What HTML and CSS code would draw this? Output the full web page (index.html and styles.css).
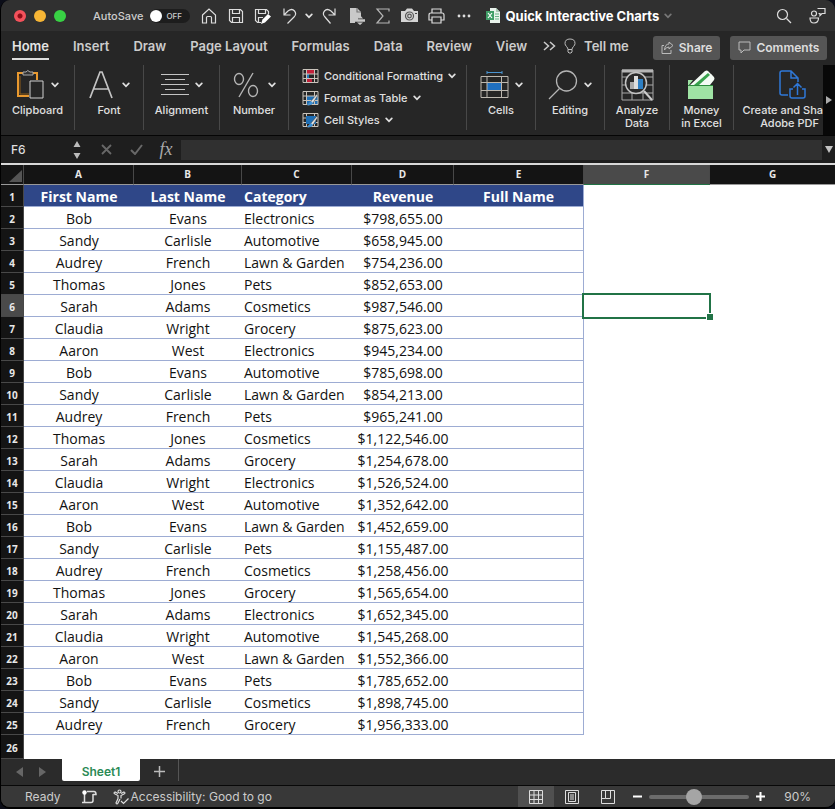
FILE: index.html
```
<!DOCTYPE html>
<html lang="en">
<head>
    <meta charset="utf-8">
    <title>Quick Interactive Charts</title>
    <link rel="stylesheet" href="styles.css">
</head>
<body>
<svg class="defs" aria-hidden="true">
    <symbol id="chev" viewBox="0 0 8 6"><path d="M1.200 1.400 4 4.300 6.800 1.400" fill="none" stroke="currentColor" stroke-width="1.700" stroke-linecap="round"/></symbol>
    <symbol id="grid" viewBox="0 0 17 16"><path d="M1 1.500h15v13H1zM1 6h15M1 10.500h15M4.500 1.500v13M12.500 1.500v13" fill="none" stroke="#c9c3bb"/></symbol>
</svg>
<div class="window">
    <header class="titlebar">
        <div class="lights">
            <button class="light red" aria-label="Close"></button>
            <button class="light yellow" aria-label="Minimize"></button>
            <button class="light green" aria-label="Zoom"></button>
        </div>
        <label class="autosave">AutoSave
            <span class="switch"><input type="checkbox" role="switch"><span class="off">OFF</span></span>
        </label>
        <div class="quick">
            <button aria-label="Home"><svg width="16" height="16" viewBox="0 0 16 16"><path d="M1.500 7 8 1l6.500 6v8h-4V9.500q0-1-1-1h-3q-1 0-1 1V15h-4z"/></svg></button>
            <button aria-label="Save"><svg width="16" height="16" viewBox="0 0 16 16"><path d="M1.500 1.500h11l2 2v11h-11l-2-2zM4.500 1.500v4h7v-4M4.500 14.500v-5h7v5"/></svg></button>
            <button aria-label="Save as"><svg width="17" height="16" viewBox="0 0 17 16"><path d="M7 14.500H3.500l-2-2v-11h11l2 2V6M4.500 1.500v4h7v-4M4.500 14.500v-5H9"/><path d="m7 16 1.500-4.500L14 6l3 2.500-6 6z" fill="#fff" stroke="none"/></svg></button>
            <button aria-label="Undo"><svg width="16" height="18" viewBox="0 0 16 18"><path d="M2 1.500V8h6.500M2.500 7.500 6 4q4-3 6.500 0 2.500 3-.5 6l-6.500 6.500"/></svg></button>
            <button class="narrow" aria-label="Undo list"><svg width="8" height="6"><use href="#chev"/></svg></button>
            <button aria-label="Redo"><svg width="16" height="18" viewBox="0 0 16 18"><path d="M14 1.500V8H7.500M13.500 7.500 10 4Q6 1 3.500 4 1 7 4 10l5.500 6.500"/></svg></button>
            <button class="page" aria-label="New sheet"><svg width="17" height="18" viewBox="0 0 17 18"><path d="M1 1h7l4 4v5H9v3H6v3H1z" fill="#c9c9c9" stroke="none"/><path d="M8 1v4h4" stroke="#777"/><path d="M6 13.500h10" stroke="#c9c9c9" stroke-width="2.500"/><path d="m11 8 3 3.500H8zM8 15.500h6l-3 2.500z" fill="#c9c9c9" stroke="none"/></svg></button>
            <button aria-label="AutoSum"><svg width="16" height="16" viewBox="0 0 16 16"><path d="M14 3.500V1H2l6 7-6 7h12v-2.500" stroke="#b5b5b5"/></svg></button>
            <button aria-label="Camera"><svg width="19" height="15" viewBox="0 0 19 15"><path d="M1 3h4l2-2.500h5L14 3h4v11H1z" fill="#d4d4d4" stroke="none"/><circle cx="9.500" cy="8" r="4" stroke="#555"/><circle cx="9.500" cy="8" r="1.800" stroke="#555"/><path d="M15 5.500h2" stroke="#444"/></svg></button>
            <button aria-label="Print"><svg width="17" height="16" viewBox="0 0 17 16"><path d="M4 4.500V1h9v3.500M4 12H1V7q0-2 2-2h11q2 0 2 2v5h-3M4 9h9v6H4z"/></svg></button>
            <button aria-label="More"><svg width="14" height="4" viewBox="0 0 14 4"><g fill="#ddd" stroke="none"><circle cx="2" cy="2" r="1.400"/><circle cx="7" cy="2" r="1.400"/><circle cx="12" cy="2" r="1.400"/></g></svg></button>
        </div>
        <h1 class="doc">
            <svg width="14" height="15" viewBox="0 0 14 15"><path d="M4 0h6l4 4v11H4z" fill="#e9f3ec"/><path d="M10 0v4h4z" fill="#a9c9b4"/><path d="M9 6h4M9 8.500h4M9 11h4" stroke="#6bb487"/><path d="M0 3h8v9H0z" fill="#3f9d66"/><path d="m2 5 4 5M6 5l-4 5" stroke="#fff" stroke-width="1.200"/></svg>
            Quick Interactive Charts
            <svg class="dim" width="8" height="6"><use href="#chev"/></svg>
        </h1>
        <div class="right">
            <button aria-label="Search"><svg width="16" height="16" viewBox="0 0 16 16"><circle cx="6.500" cy="6.500" r="5"/><path d="m10.500 10.500 4.500 4.500"/></svg></button>
            <button aria-label="Collaborate"><svg width="17" height="17" viewBox="0 0 17 17"><circle cx="5" cy="6.500" r="2.500"/><path d="M1 11h8.500q0 5-4.500 5-4 0-4-5zM8.500 1.500H16v5h-3l-2 2v-2h-1.500"/></svg></button>
        </div>
    </header>

    <nav class="tabs">
        <a class="active" href="#">Home</a>
        <a href="#">Insert</a>
        <a href="#">Draw</a>
        <a href="#">Page Layout</a>
        <a href="#">Formulas</a>
        <a href="#">Data</a>
        <a href="#">Review</a>
        <a href="#">View</a>
        <button class="tell" aria-label="More tabs"><svg width="13" height="10" viewBox="0 0 13 10"><path d="m1 1 4.500 4L1 9M7 1l4.500 4L7 9" fill="none" stroke="#ccc" stroke-width="1.500"/></svg></button>
        <button class="tell"><svg width="12" height="16" viewBox="0 0 12 16"><path d="M4 11.500Q4 10 2.500 8.500 1 7 1 5.500 1 1 6 1t5 4.500Q11 7 9.500 8.500 8 10 8 11.500zM4 11.500V14l1 1h2l1-1v-2.500" fill="none" stroke="#bbb"/></svg>Tell me</button>
        <div class="actions">
            <button class="action"><svg width="13" height="13" viewBox="0 0 13 13"><path d="M3 4.500H1v8h9V9M8 1l4 3.500L8 8V6Q5 6 3.500 9 4 3 8 3z"/></svg>Share</button>
            <button class="action"><svg width="13" height="13" viewBox="0 0 13 13"><path d="M1 1h11v8H6l-3 3V9H1z"/></svg>Comments</button>
        </div>
    </nav>

    <section class="ribbon">
        <button class="group g-clip">
            <span class="pic">
                <svg width="29" height="31" viewBox="0 0 29 31"><path d="M7 4H2v23h11M17 4h4v7" fill="none" stroke="#e9992f" stroke-width="2"/><path d="M4 7v18h9" fill="none" stroke="#8b5a18"/><path d="M7 6V3h3q1.500-3 4 0h3v3z" fill="#333" stroke="#aaa"/><path d="M14 12h13v17H14z" fill="#262626" stroke="#d0d0d0"/></svg>
                <svg width="8" height="6"><use href="#chev"/></svg>
            </span>Clipboard</button>
        <button class="group g-font">
            <span class="pic wide">
                <svg width="24" height="30" viewBox="0 0 24 30"><path d="M1 28 11 2h2l10 26M5 19h14" fill="none" stroke="#c4c4c4" stroke-width="1.700"/></svg>
                <svg width="8" height="6"><use href="#chev"/></svg>
            </span>Font</button>
        <button class="group g-align">
            <span class="pic">
                <svg width="28" height="24" viewBox="0 0 28 24"><path d="M0 1.500h28M4 6.500h20M0 11.500h28M4 16.500h20M0 21.500h28" stroke="#c4c4c4"/></svg>
                <svg width="8" height="6"><use href="#chev"/></svg>
            </span>Alignment</button>
        <button class="group g-num">
            <span class="pic wide">
                <svg width="26" height="26" viewBox="0 0 26 26"><g fill="none" stroke="#b5b5b5" stroke-width="1.400"><ellipse cx="6" cy="7" rx="4.500" ry="5.500"/><ellipse cx="20" cy="19" rx="4.500" ry="5.500"/><path d="M20 1 6 25"/></g></svg>
                <svg width="8" height="6"><use href="#chev"/></svg>
            </span>Number</button>
        <div class="group g-styles">
            <button><svg width="17" height="16"><path d="M4 1h8v5H4zM4 11h6v4H4z" fill="#c2213b"/><path d="M4 6h3v4H4z" fill="#2777b8"/><use href="#grid"/></svg>Conditional Formatting<svg width="8" height="6"><use href="#chev"/></svg></button>
            <button><svg width="17" height="16"><path d="M5 6h11v9H5z" fill="#1f6fb5"/><use href="#grid"/><path d="m15 4-6 7-4 4q4 1 6-2l5-8z" fill="#ddd" stroke="#333" stroke-width=".5"/><path d="m9 11-4 4q4 1 6-2z" fill="#3d92d8"/></svg>Format as Table<svg width="8" height="6"><use href="#chev"/></svg></button>
            <button><svg width="17" height="16"><use href="#grid"/><path d="M4 4h10v8H4z" fill="#1f6fb5"/><path d="m15 4-6 7-4 4q4 1 6-2l5-8z" fill="#ddd" stroke="#333" stroke-width=".5"/><path d="m9 11-4 4q4 1 6-2z" fill="#3d92d8"/></svg>Cell Styles<svg width="8" height="6"><use href="#chev"/></svg></button>
        </div>
        <button class="group g-cells">
            <span class="pic">
                <svg width="29" height="29" viewBox="0 0 29 29"><path d="M7 2.500h15M7 1v3M22 1v3" fill="none" stroke="#4a94d0"/><path d="M7 13h14v7H7z" fill="#1f6fc0"/><path d="M1 6.500h27v21H1zM1 12.500h27M1 20.500h27M7 6.500v21M21.500 6.500v21" fill="none" stroke="#bdb8b0"/></svg>
                <svg width="8" height="6"><use href="#chev"/></svg>
            </span>Cells</button>
        <button class="group g-edit">
            <span class="pic">
                <svg width="30" height="30" viewBox="0 0 30 30"><circle cx="18.500" cy="11" r="10" fill="none" stroke="#b5b5b5" stroke-width="1.300"/><path d="M11.500 18.500 1 29" stroke="#b5b5b5" stroke-width="1.300"/></svg>
                <svg width="8" height="6"><use href="#chev"/></svg>
            </span>Editing</button>
        <button class="group g-an">
            <span class="pic"><svg width="33" height="32" viewBox="0 0 33 32"><path d="M1 1h31v30H1zM1 8h31M1 16h31M1 24h31M11 20v11M22 22v9" fill="none" stroke="#a8a8a8"/><path d="M1 2h31" stroke="#b5b5b5" stroke-width="3"/><circle cx="15" cy="14" r="10.500" fill="#2a2a2a" stroke="#c4c4c4" stroke-width="1.500"/><path d="M9 13h4v7H9z" fill="#aaa"/><path d="M13 7h4v13h-4z" fill="#ddd"/><path d="M17 10h5v10h-5z" fill="#2d7fc4"/><path d="m23 22 8 9" stroke="#ccc" stroke-width="2"/></svg></span>Analyze<br>Data</button>
        <button class="group g-money">
            <span class="pic"><svg width="29" height="30" viewBox="0 0 29 30"><path d="M3 15 18 1q2-1 3 0l6 6q1 2 0 3l-4 5z" fill="#f4fbf5"/><path d="m7 15 14-12 4 4-9 8z" fill="#38a24d"/><path d="m12 15 12-11 3 4-7 7z" fill="#f4fbf5"/><path d="M1 10h5l-4 5h24v14H1z" fill="#9fe3a4"/><path d="M1 15.500h25" stroke="#2b8a3c"/></svg></span>Money<br>in Excel</button>
        <button class="group g-pdf">
            <span class="pic"><svg width="27" height="30" viewBox="0 0 27 30"><path d="M9 25H3q-2 0-2-2V3q0-2 2-2h9l7 7v4M12 1v7h7M14 19h-3v7q0 2 2 2h11q2 0 2-2v-7h-3M18.500 25V14M14.500 17.500l4-4 4 4" fill="none" stroke="#2f78d8" stroke-width="1.500"/></svg></span><span>Create and Sha</span><span class="second">Adobe PDF</span></button>
        <button class="more" aria-label="Scroll ribbon"><svg width="6" height="8" viewBox="0 0 6 8"><path d="M0 0v8l6-4z" fill="#aaa"/></svg></button>
    </section>

    <section class="formula">
        <input class="name" aria-label="Name box" value="F6">
        <span class="step"><svg width="8" height="20" viewBox="0 0 8 20"><path d="M4 1 7.500 7h-7zM.5 13h7L4 19z" fill="#bbb"/></svg></span>
        <button aria-label="Cancel"><svg width="11" height="11" viewBox="0 0 11 11"><path d="m1 1 9 9M10 1l-9 9" stroke="#686868" stroke-width="1.800"/></svg></button>
        <button aria-label="Enter"><svg width="13" height="11" viewBox="0 0 13 11"><path d="m1 6 4 4 7-9" fill="none" stroke="#686868" stroke-width="2"/></svg></button>
        <button class="fx" aria-label="Insert function">fx</button>
        <input class="entry" aria-label="Formula bar">
        <button class="expand" aria-label="Expand"><svg width="8" height="7" viewBox="0 0 8 7"><path d="M0 0h8L4 7z" fill="#c4c4c4"/></svg></button>
    </section>

    <main class="sheet">
        <table>
            <colgroup><col class="c-num"><col class="c-a"><col class="c-b"><col class="c-c"><col class="c-d"><col class="c-e"><col class="c-f"><col></colgroup>
            <thead>
                <tr><th class="corner"><svg width="13" height="12" viewBox="0 0 13 12"><path d="M13 0v12H0z" fill="#555"/></svg></th><th>A</th><th>B</th><th>C</th><th>D</th><th>E</th><th class="sel">F</th><th>G</th></tr>
            </thead>
            <tbody>
                <tr class="head"><th>1</th><td>First Name</td><td>Last Name</td><td>Category</td><td>Revenue</td><td>Full Name</td><td></td><td></td></tr>
                <tr><th>2</th><td>Bob</td><td>Evans</td><td>Electronics</td><td>$798,655.00</td><td></td><td></td><td></td></tr>
                <tr><th>3</th><td>Sandy</td><td>Carlisle</td><td>Automotive</td><td>$658,945.00</td><td></td><td></td><td></td></tr>
                <tr><th>4</th><td>Audrey</td><td>French</td><td>Lawn &amp; Garden</td><td>$754,236.00</td><td></td><td></td><td></td></tr>
                <tr><th>5</th><td>Thomas</td><td>Jones</td><td>Pets</td><td>$852,653.00</td><td></td><td></td><td></td></tr>
                <tr><th class="sel">6</th><td>Sarah</td><td>Adams</td><td>Cosmetics</td><td>$987,546.00</td><td></td><td class="cursor"></td><td></td></tr>
                <tr><th>7</th><td>Claudia</td><td>Wright</td><td>Grocery</td><td>$875,623.00</td><td></td><td></td><td></td></tr>
                <tr><th>8</th><td>Aaron</td><td>West</td><td>Electronics</td><td>$945,234.00</td><td></td><td></td><td></td></tr>
                <tr><th>9</th><td>Bob</td><td>Evans</td><td>Automotive</td><td>$785,698.00</td><td></td><td></td><td></td></tr>
                <tr><th>10</th><td>Sandy</td><td>Carlisle</td><td>Lawn &amp; Garden</td><td>$854,213.00</td><td></td><td></td><td></td></tr>
                <tr><th>11</th><td>Audrey</td><td>French</td><td>Pets</td><td>$965,241.00</td><td></td><td></td><td></td></tr>
                <tr><th>12</th><td>Thomas</td><td>Jones</td><td>Cosmetics</td><td>$1,122,546.00</td><td></td><td></td><td></td></tr>
                <tr><th>13</th><td>Sarah</td><td>Adams</td><td>Grocery</td><td>$1,254,678.00</td><td></td><td></td><td></td></tr>
                <tr><th>14</th><td>Claudia</td><td>Wright</td><td>Electronics</td><td>$1,526,524.00</td><td></td><td></td><td></td></tr>
                <tr><th>15</th><td>Aaron</td><td>West</td><td>Automotive</td><td>$1,352,642.00</td><td></td><td></td><td></td></tr>
                <tr><th>16</th><td>Bob</td><td>Evans</td><td>Lawn &amp; Garden</td><td>$1,452,659.00</td><td></td><td></td><td></td></tr>
                <tr><th>17</th><td>Sandy</td><td>Carlisle</td><td>Pets</td><td>$1,155,487.00</td><td></td><td></td><td></td></tr>
                <tr><th>18</th><td>Audrey</td><td>French</td><td>Cosmetics</td><td>$1,258,456.00</td><td></td><td></td><td></td></tr>
                <tr><th>19</th><td>Thomas</td><td>Jones</td><td>Grocery</td><td>$1,565,654.00</td><td></td><td></td><td></td></tr>
                <tr><th>20</th><td>Sarah</td><td>Adams</td><td>Electronics</td><td>$1,652,345.00</td><td></td><td></td><td></td></tr>
                <tr><th>21</th><td>Claudia</td><td>Wright</td><td>Automotive</td><td>$1,545,268.00</td><td></td><td></td><td></td></tr>
                <tr><th>22</th><td>Aaron</td><td>West</td><td>Lawn &amp; Garden</td><td>$1,552,366.00</td><td></td><td></td><td></td></tr>
                <tr><th>23</th><td>Bob</td><td>Evans</td><td>Pets</td><td>$1,785,652.00</td><td></td><td></td><td></td></tr>
                <tr><th>24</th><td>Sandy</td><td>Carlisle</td><td>Cosmetics</td><td>$1,898,745.00</td><td></td><td></td><td></td></tr>
                <tr><th>25</th><td>Audrey</td><td>French</td><td>Grocery</td><td>$1,956,333.00</td><td></td><td></td><td></td></tr>
                <tr class="blank"><th>26</th><td></td><td></td><td></td><td></td><td></td><td></td><td></td></tr>
            </tbody>
        </table>
    </main>

    <nav class="sheets">
        <button aria-label="Previous sheet"><svg width="7" height="10" viewBox="0 0 7 10"><path d="M7 0v10L0 5z" fill="#666"/></svg></button>
        <button aria-label="Next sheet"><svg width="7" height="10" viewBox="0 0 7 10"><path d="M0 0v10l7-5z" fill="#666"/></svg></button>
        <a class="current" href="#">Sheet1</a>
        <button class="add" aria-label="Add sheet"><svg width="11" height="11" viewBox="0 0 11 11"><path d="M5.500 0v11M0 5.500h11" stroke="#bbb" stroke-width="1.500"/></svg></button>
    </nav>

    <footer class="status">
        <span class="ready">Ready</span>
        <svg class="macro" width="16" height="14" viewBox="0 0 16 14"><path d="M3.500 3v9M1 12.500h9q2 0 2-2V4M6 1.500h7q2 0 2 3h-3" fill="none" stroke="#ddd" stroke-width="1.500"/><circle cx="3.500" cy="2.500" r="2.200" fill="#fff"/></svg>
        <button class="access"><svg width="16" height="16" viewBox="0 0 16 16"><g fill="none" stroke="#ddd" stroke-width="1.200"><circle cx="6.500" cy="2.500" r="1.500"/><path d="M5 4.500 2 3Q0 4 2 5l3 1.500v3L3 14q1 2 2 0l2-4M8 4.500 11 3q2 1 0 2L8 6.500v3M8 12l2.500 2.500 5-5"/></g></svg>Accessibility: Good to go</button>
        <div class="views">
            <button class="on" aria-label="Normal"><svg width="14" height="14" viewBox="0 0 14 14"><path d="M.5.5h13v13H.5zM.5 5h13M.5 9.500h13M5 .5v13M9.500.5v13"/></svg></button>
            <button aria-label="Page layout"><svg width="14" height="14" viewBox="0 0 14 14"><path d="M.5.5h13v13H.5zM3.500 2.500h7v9h-7zM5 5h4M5 7h4M5 9h4"/></svg></button>
            <button aria-label="Page break"><svg width="14" height="14" viewBox="0 0 14 14"><path d="M.5.5h13v13H.5zM4.500.5v8h5v-8M.5 8.500h4"/></svg></button>
        </div>
        <div class="zoom">
            <button aria-label="Zoom out"><svg width="9" height="9" viewBox="0 0 9 9"><path d="M0 4.500h9" stroke="#fff" stroke-width="2"/></svg></button>
            <input type="range" aria-label="Zoom" min="0" max="100" value="44">
            <button aria-label="Zoom in"><svg width="9" height="9" viewBox="0 0 9 9"><path d="M0 4.500h9M4.500 0v9" stroke="#fff" stroke-width="2"/></svg></button>
            <span class="pct">90%</span>
        </div>
    </footer>
</div>
</body>
</html>
```
FILE: styles.css
```
* {
    box-sizing: border-box;
}
body {
    margin: 0;
    background: #0b0d18;
    font-family: Inter, "Liberation Sans", sans-serif;
    color: #e0e0e0;
}
button {
    display: flex;
    align-items: center;
    justify-content: center;
    padding: 0;
    border: 0;
    background: none;
    color: inherit;
    font: inherit;
}
a {
    color: inherit;
    text-decoration: none;
}
svg {
    display: block;
    flex: none;
}
.defs {
    position: absolute;
    width: 0;
    height: 0;
}
.window {
    display: flex;
    flex-direction: column;
    height: 100vh;
    border-left: 1px solid #000;
    border-bottom: 2px solid #000;
    border-radius: 10px;
    overflow: hidden;
    background: #262626;
}

/* title bar */
.titlebar {
    display: flex;
    align-items: center;
    height: 31px;
    padding: 0 9px 0 13px;
    background: #303030;
}
.lights {
    display: flex;
    gap: 8px;
}
.light {
    width: 12px;
    height: 12px;
    border-radius: 50%;
}
.red {
    background: radial-gradient(circle, #8c0d16 2px, #f4515b 3px);
}
.yellow {
    background: #f6b535;
}
.green {
    background: #38d144;
}
.autosave {
    display: flex;
    align-items: center;
    gap: 7px;
    margin: 0 5px 0 27px;
    font-size: 11px;
    font-weight: 500;
    color: #ccc;
}
.switch {
    display: flex;
    align-items: center;
    width: 40px;
    height: 14px;
    border-radius: 7px;
    background: #1d1d1d;
    font-size: 8px;
    gap: 4px;
}
.switch input {
    appearance: none;
    width: 12px;
    height: 12px;
    margin: 0;
    border-radius: 50%;
    background: #fff;
}
.quick {
    display: flex;
}
.quick button {
    width: 27px;
    height: 24px;
}
.quick .narrow {
    width: 12px;
}
.quick .page {
    padding-left: 4px;
}
.quick svg,
.right svg {
    fill: none;
    stroke: #ddd;
    stroke-width: 1.2;
}
.doc {
    display: flex;
    align-items: center;
    gap: 5px;
    margin: 0 0 0 9px;
    font-size: 13px;
    font-weight: 700;
    color: #fff;
    white-space: nowrap;
}
.dim {
    color: #777;
}
.right {
    display: flex;
    gap: 17px;
    margin-left: auto;
}

/* ribbon tabs */
.tabs {
    display: flex;
    align-items: center;
    gap: 24px;
    height: 31px;
    padding: 0 8px 0 11px;
    font-size: 13px;
    font-weight: 600;
    color: #ccc;
    white-space: nowrap;
}
.tabs a {
    height: 27px;
    line-height: 26px;
    border-bottom: 2px solid transparent;
}
.tabs .active {
    border-color: #ddd;
    color: #e4e4e4;
}
.tell {
    gap: 8px;
    margin-left: -8px;
    padding-bottom: 2px;
}
.tell + .tell {
    margin-left: -16px;
}
.actions {
    display: flex;
    gap: 10px;
    margin-left: auto;
    padding-top: 2px;
}
.action {
    height: 24px;
    gap: 5px;
    padding: 0 8px;
    border-radius: 3px;
    background: #555;
    font-size: 12px;
    color: #ddd;
}
.action svg {
    fill: none;
    stroke: #bbb;
}

/* ribbon */
.ribbon {
    display: flex;
    height: 73px;
    padding-top: 3px;
    font-size: 11px;
    font-weight: 500;
    line-height: 13px;
}
.group {
    flex: none;
    flex-direction: column;
    justify-content: flex-start;
    height: 65px;
    border-right: 1px solid #484848;
    white-space: nowrap;
}
.pic {
    display: flex;
    align-items: center;
    justify-content: center;
    height: 39px;
    gap: 6px;
}
.wide {
    gap: 9px;
}
.g-clip {
    width: 74px;
}
.g-font,
.g-num,
.g-cells,
.g-edit {
    width: 69px;
}
.g-align {
    width: 76px;
}
.g-styles {
    display: flex;
    width: 178px;
    padding-left: 13px;
}
.g-styles button {
    flex: none;
    justify-content: flex-start;
    height: 22px;
    gap: 5px;
}
.g-an {
    width: 65px;
}
.g-money {
    width: 64px;
}
.g-pdf {
    flex: 1 1 0;
    min-width: 0;
    align-items: flex-end;
    border: 0;
}
.g-pdf .pic {
    padding-right: 17px;
}
.second {
    padding-right: 4px;
}
.more {
    width: 12px;
    height: 70px;
    background: #080808;
}

/* formula bar */
.formula {
    display: flex;
    align-items: center;
    height: 30px;
    border-top: 1px solid #050505;
    border-bottom: 2px solid #d8d8d8;
    background: #1e1e1e;
}
.formula input {
    border: 0;
    outline: 0;
    background: none;
    color: #ddd;
    font: 500 12px Inter, "Liberation Sans", sans-serif;
}
.formula .name {
    width: 72px;
    padding: 0 0 0 10px;
}
.formula button {
    width: 30px;
}
.step {
    width: 18px;
}
.formula .fx {
    font: italic 18px "Liberation Serif", serif;
    color: #aaa;
}
.formula .entry {
    flex: 1;
    min-width: 0;
    height: 20px;
    background: #303030;
}
.formula .expand {
    width: 13px;
}

/* grid */
.sheet {
    flex: 1;
    min-height: 0;
    overflow: hidden;
    background: #fff;
}
table {
    width: 100%;
    table-layout: fixed;
    border-collapse: separate;
    border-spacing: 0;
    font-family: "Open Sans", "Liberation Sans", sans-serif;
    font-size: 14px;
    color: #111;
}
.c-num {
    width: 23px;
}
.c-a,
.c-c {
    width: 110px;
}
.c-b {
    width: 108px;
}
.c-d {
    width: 102px;
}
.c-e {
    width: 130px;
}
.c-f {
    width: 126px;
}
th {
    padding: 0;
    border-right: 1px solid #484848;
    border-bottom: 1px solid #999;
    background: #141414;
    color: #e8e8e8;
    font-size: 10px;
    line-height: 19px;
}
thead th {
    height: 20px;
}
thead th:last-child {
    border-right: 0;
}
.corner svg {
    margin: 3px 0 0 8px;
}
th.sel {
    background: #4a4a4a;
}
thead th.sel {
    border-bottom-color: #217346;
}
tbody th {
    padding-top: 4px;
    border-color: #484848;
    line-height: 17px;
}
td {
    height: 22px;
    padding: 2px 0 0;
    border-bottom: 1px solid #9dacd3;
    line-height: 19px;
    text-align: center;
}
td:nth-child(4) {
    padding-left: 2px;
    text-align: left;
}
td:nth-child(6) {
    border-right: 1px solid #9dacd3;
}
td:nth-child(n+7) {
    border: 0;
}
.head td {
    font-weight: 700;
    color: #fff;
}
.head td:nth-child(-n+6) {
    background: #2f4788;
}
.blank td {
    height: 24px;
}
.blank td:nth-child(n) {
    border: 0;
}
.cursor {
    position: relative;
}
.cursor::before {
    content: "";
    position: absolute;
    inset: -2px -1px -2px -2px;
    border: 2px solid #217346;
}
.cursor::after {
    content: "";
    position: absolute;
    right: -3px;
    bottom: -3px;
    width: 6px;
    height: 6px;
    border: solid #fff;
    border-width: 1px 0 0 1px;
    background: #217346;
}

/* sheet tabs */
.sheets {
    display: flex;
    height: 27px;
    padding-left: 7px;
    border-bottom: 1px solid #080808;
    background: #2b2b2b;
}
.sheets button {
    width: 23px;
}
.sheets .current {
    width: 78px;
    height: 22px;
    margin-left: 8px;
    border-radius: 0 0 2px 2px;
    background: #fff;
    color: #2b8a55;
    font-size: 12px;
    font-weight: 600;
    line-height: 25px;
    text-align: center;
}
.sheets .add {
    width: 39px;
    height: 22px;
    padding-top: 2px;
    border-right: 1px solid #555;
}

/* status bar */
.status {
    display: flex;
    align-items: center;
    height: 21px;
    padding-right: 24px;
    background: #383838;
    font-size: 12px;
    color: #ccc;
}
.ready {
    margin: 0 20px 0 24px;
}
.access {
    gap: 2px;
    margin-left: 16px;
}
.views {
    display: flex;
    align-self: stretch;
    margin-left: auto;
}
.views button {
    width: 36px;
}
.views svg {
    fill: none;
    stroke: #ddd;
}
.views .on {
    background: #505050;
}
.zoom {
    display: flex;
    align-items: center;
    gap: 7px;
    margin-left: 7px;
}
.zoom input {
    appearance: none;
    width: 100px;
    height: 4px;
    margin: 0;
    border-radius: 2px;
    background: #6c6c6c;
}
.zoom input::-webkit-slider-thumb {
    appearance: none;
    width: 16px;
    height: 16px;
    border-radius: 50%;
    background: #a5a5a5;
}
.pct {
    margin-left: 12px;
}
```
